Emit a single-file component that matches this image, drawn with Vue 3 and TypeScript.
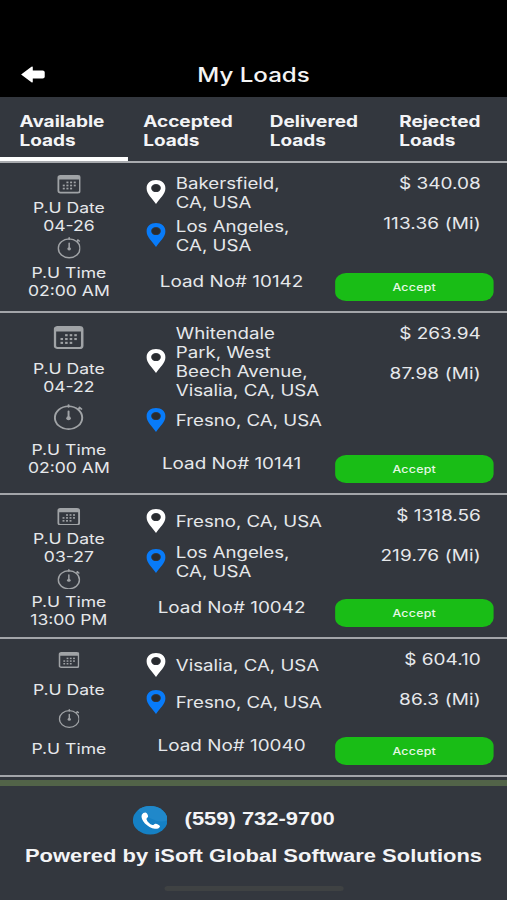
<script setup lang="ts">
import { ref } from 'vue'

interface Load {
  no: string
  date: string
  time: string
  from: string[]
  to: string[]
  price: string
  miles: string
  size: 'a' | 'b' | 'c' | 'd'
}

const tabs: string[] = ['Available', 'Accepted', 'Delivered', 'Rejected']
const active = ref(0)

const loads: Load[] = [
  { no: '10142', date: '04-26', time: '02:00 AM', from: ['Bakersfield,', 'CA, USA'], to: ['Los Angeles,', 'CA, USA'], price: '340.08', miles: '113.36', size: 'a' },
  { no: '10141', date: '04-22', time: '02:00 AM', from: ['Whitendale', 'Park, West', 'Beech Avenue,', 'Visalia, CA, USA'], to: ['Fresno, CA, USA'], price: '263.94', miles: '87.98', size: 'b' },
  { no: '10042', date: '03-27', time: '13:00 PM', from: ['Fresno, CA, USA'], to: ['Los Angeles,', 'CA, USA'], price: '1318.56', miles: '219.76', size: 'c' },
  { no: '10040', date: '', time: '', from: ['Visalia, CA, USA'], to: ['Fresno, CA, USA'], price: '604.10', miles: '86.3', size: 'd' },
]

const dots: [number, number][] = [
  [11, 9.5], [15, 9.5], [19, 9.5],
  [7, 13.5], [11, 13.5], [15, 13.5], [19, 13.5],
  [7, 17.5], [11, 17.5], [15, 17.5],
]
</script>

<template>
  <div class="screen">
    <header class="bar">
      <svg class="back" viewBox="0 0 20 16" preserveAspectRatio="none" aria-hidden="true">
        <path d="M0.3 8 8.8 0.6Q9.9 0 9.9 1.1V4.2H18Q19.7 4.2 19.7 5.8V10.2Q19.7 11.8 18 11.8H9.9V14.9Q9.9 16 8.8 15.4Z" fill="#fff" />
      </svg>
      <h1 class="title">My Loads</h1>
    </header>

    <nav class="tabs">
      <button v-for="(tab, i) in tabs" :key="tab" class="tab" :class="{ on: i === active }" @click="active = i">
        <span>{{ tab }}</span><span>Loads</span>
      </button>
    </nav>

    <main>
      <article v-for="load in loads" :key="load.no" class="load" :class="load.size">
        <section class="when">
          <svg class="cal" viewBox="0 0 26 24" preserveAspectRatio="none" aria-hidden="true">
            <rect x="1.1" y="1.1" width="23.8" height="21.8" rx="2.4" fill="none" stroke="#a0a3a6" stroke-width="2.2" />
            <path d="M1 5.8V3.4Q1 1 3.4 1H22.6Q25 1 25 3.4V5.8Z" fill="#a0a3a6" />
            <rect v-for="([x, y], i) in dots" :key="i" :x="x - 1" :y="y - 1" width="2.2" height="2.2" fill="#a0a3a6" />
          </svg>
          <div class="label first"><span>P.U Date</span><span v-if="load.date">{{ load.date }}</span></div>
          <svg class="watch" viewBox="0 0 26 27" preserveAspectRatio="none" aria-hidden="true">
            <g fill="none" stroke="#a0a3a6" stroke-width="1.7" stroke-linecap="round">
              <circle cx="13" cy="14.2" r="11.9" />
              <path d="M13 1V3M21.4 5.6 23 4M22.4 3.6 24.2 5.2M13 7.6V14" />
            </g>
            <circle cx="13" cy="14.8" r="2" fill="#a0a3a6" />
          </svg>
          <div class="label"><span>P.U Time</span><span v-if="load.time">{{ load.time }}</span></div>
        </section>

        <section class="route">
          <div v-for="(stop, s) in [load.from, load.to]" :key="s" class="stop">
            <svg class="pin" :class="{ dest: s === 1 }" viewBox="0 0 16 24" aria-hidden="true">
              <path fill-rule="evenodd" d="M8 0C12.5 0 15.8 3.5 15.8 8.2 15.8 13.6 11 18.6 8 24 5 18.6.2 13.6.2 8.2.2 3.5 3.5 0 8 0ZM8 4.1A4 4 0 1 0 8 12.1 4 4 0 1 0 8 4.1Z" />
              <circle cx="8" cy="8.1" r="3.2" fill="#292b2f" />
            </svg>
            <div class="address"><span v-for="line in stop" :key="line">{{ line }}</span></div>
          </div>
          <div class="number">Load No# {{ load.no }}</div>
        </section>

        <section class="pay">
          <div>$ {{ load.price }}</div>
          <div class="miles">{{ load.miles }} (Mi)</div>
          <button class="accept">Accept</button>
        </section>
      </article>
    </main>

    <footer class="foot">
      <div class="call">
        <svg class="phone" viewBox="0 0 28 28" aria-hidden="true">
          <circle cx="14" cy="14" r="14" fill="#1580c4" />
          <path d="M14 0A14 14 0 0 1 28 14Q22 17 14 12 7 7 4 4.2A14 14 0 0 1 14 0Z" fill="#2088ca" />
          <path d="M7.2 8.5Q8.2 6.6 10.1 6.5C11.3 6.4 12.3 9.1 12.3 10.3 12.3 11.5 10.8 11.7 11 13 11.6 15.5 13.8 18 15.8 18.7 17 18.9 17.1 17.2 18.4 17.4 19.6 17.6 21.8 18.8 21.9 19.8 21.8 21.7 19.5 22.6 17.8 22.3 12 21.5 5.7 13.6 7.2 8.5Z" fill="#fff" />
        </svg>
        <span class="tel">(559) 732-9700</span>
      </div>
      <div class="powered">Powered by iSoft Global Software Solutions</div>
      <div class="home"></div>
    </footer>
  </div>
</template>

<style>
body { background: #33373e; overflow: hidden; }
</style>

<style scoped>
/* Laid out on a 416px wide canvas, widened to fill the viewport. */
.screen {
  width: 416px;
  height: 900px;
  display: flex;
  flex-direction: column;
  transform: scaleX(1.21875);
  transform-origin: 0 0;
  background: #33373e;
  color: #e6e8eb;
  font: 400 15.3px/19px Inter, "Liberation Sans", sans-serif;
  overflow: hidden;
}
button { border: 0; padding: 0; font: inherit; color: inherit; background: none; }
.bar {
  height: 97px;
  flex: none;
  box-sizing: border-box;
  padding: 52px 0 0 17px;
  display: grid;
  grid-template-columns: 20px 1fr 37px;
  align-items: center;
  background: #000;
}
.back { width: 20px; height: 17px; }
.title { margin: 0; font-size: 19.8px; line-height: 26px; font-weight: 500; text-align: center; color: #f4f4f4; }
.tabs {
  height: 66px;
  flex: none;
  box-sizing: border-box;
  display: grid;
  grid-template-columns: 104.5px 103.5px 106px 102px;
  border-bottom: 2px solid #a9abaf;
}
.tab {
  display: flex;
  flex-direction: column;
  align-items: flex-start;
  padding: 15px 0 0 16px;
  box-sizing: border-box;
  height: 64px;
  font-size: 15.6px;
  line-height: 19px;
  font-weight: 700;
  color: #f3f4f6;
}
.tab:nth-child(2) { padding-left: 13px; }
.tab:nth-child(3) { padding-left: 13.3px; }
.tab:nth-child(4) { padding-left: 13.5px; }
.tab.on { border-bottom: 4px solid #fff; }
.load {
  display: grid;
  grid-template-columns: 113px 154px 127.5px 21.5px;
  box-sizing: border-box;
  border-bottom: 2px solid #a3a5a9;
}
.a { height: 150px; }
.b { height: 182px; }
.c { height: 144px; }
.d { height: 138px; }
.when { display: flex; flex-direction: column; align-items: center; }
.cal, .watch { display: block; flex: none; }
.label { display: flex; flex-direction: column; align-items: center; font-size: 14.4px; line-height: 18px; }
.a .cal { width: 19.5px; height: 18.5px; margin: 12px 0 5.5px; }
.a .watch { width: 19.5px; height: 21.5px; margin: 2px 0 5.5px; }
.b .cal { width: 24.5px; height: 23px; margin: 13px 0 11px; }
.b .watch { width: 24.5px; height: 26px; margin: 8px 0 11px; }
.c .cal { width: 18.7px; height: 17.5px; margin: 12.5px 0 5px; }
.c .watch { width: 19px; height: 20.5px; margin: 2.5px 0 3.5px; }
.d .cal { width: 17.3px; height: 16px; margin: 13px 0 13px; }
.d .watch { width: 17.7px; height: 19px; margin: 10px 0 12px; }
.route { display: flex; flex-direction: column; gap: 5px; padding-top: 10.4px; }
.stop { display: flex; align-items: center; min-height: 32px; padding-left: 7px; }
.pin { position: relative; top: -0.6px; width: 16px; height: 24px; margin-right: 8.3px; fill: #fff; flex: none; }
.pin.dest { fill: #087bf9; }
.address { display: flex; flex-direction: column; white-space: nowrap; }
.address span { position: relative; top: 0.5px; }
.number { margin-top: 12.6px; text-align: center; font-size: 15.5px; }
.pay { display: flex; flex-direction: column; align-items: flex-end; padding: 10.6px 0 10px; font-size: 15.6px; }
.miles { margin-top: 21.4px; letter-spacing: .1px; }
.accept {
  width: 130px;
  height: 28px;
  margin: auto -10.4px 0 0;
  flex: none;
  border-radius: 9px;
  background: #19bd16;
  color: #e5f8e5;
  font-size: 10.2px;
  font-weight: 500;
  letter-spacing: .2px;
}
.foot {
  flex: 1;
  margin-top: 3px;
  border-top: 6px solid #526348;
  display: flex;
  flex-direction: column;
  align-items: center;
  font: 700 19px/22px "Liberation Sans", Arial, sans-serif;
  color: #f3f4f6;
  white-space: nowrap;
}
.call { display: flex; align-items: center; margin: 20px 0 0 -32.5px; }
.phone { width: 28.5px; height: 28.5px; margin-right: 14px; }
.tel { font-size: 18px; margin-top: -3px; }
.powered { font-size: 18px; margin-top: 10px; }
.home { width: 147px; height: 5px; border-radius: 3px; background: #3f4243; margin-top: 19.5px; }
</style>
